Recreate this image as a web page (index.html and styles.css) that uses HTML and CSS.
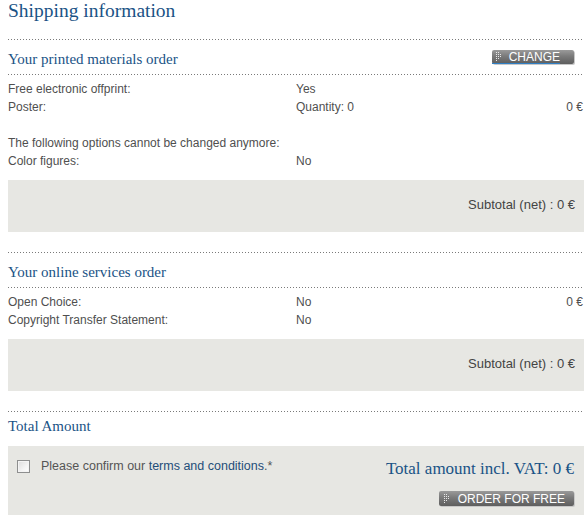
FILE: index.html
```html
<!DOCTYPE html>
<html>
<head>
<meta charset="utf-8">
<link rel="stylesheet" href="styles.css">
</head>
<body>
<div class="page">
  <h1 class="title">Shipping information</h1>
  <div class="dots"></div>

  <div class="sec-head">
    <h2 class="sec-title">Your printed materials order</h2>
    <a class="btn btn-change" href="#"><span class="btn-in"><svg class="grip" width="5" height="9" viewBox="0 0 5 9"><g fill="#e8e8e8"><rect x="0" y="0" width="1" height="1"/><rect x="2" y="0" width="1" height="1"/><rect x="0" y="2" width="1" height="1"/><rect x="2" y="2" width="1" height="1"/><rect x="4" y="2" width="1" height="1"/><rect x="0" y="4" width="1" height="1"/><rect x="2" y="4" width="1" height="1"/><rect x="4" y="4" width="1" height="1"/><rect x="0" y="6" width="1" height="1"/><rect x="2" y="6" width="1" height="1"/><rect x="0" y="8" width="1" height="1"/></g></svg><span class="btn-text">CHANGE</span></span></a>
  </div>
  <div class="dots"></div>

  <div class="rows">
    <div class="row"><span class="c1">Free electronic offprint:</span><span class="c2">Yes</span><span class="c3"></span></div>
    <div class="row"><span class="c1">Poster:</span><span class="c2">Quantity: 0</span><span class="c3">0 €</span></div>
    <div class="row"><span class="c1">&nbsp;</span><span class="c2"></span><span class="c3"></span></div>
    <div class="row"><span class="full">The following options cannot be changed anymore:</span></div>
    <div class="row"><span class="c1">Color figures:</span><span class="c2">No</span><span class="c3"></span></div>
  </div>
  <div class="subtotal">Subtotal (net) : 0 €</div>

  <div class="dots gap"></div>
  <div class="sec-head">
    <h2 class="sec-title">Your online services order</h2>
  </div>
  <div class="dots"></div>
  <div class="rows">
    <div class="row"><span class="c1">Open Choice:</span><span class="c2">No</span><span class="c3">0 €</span></div>
    <div class="row"><span class="c1">Copyright Transfer Statement:</span><span class="c2">No</span><span class="c3"></span></div>
  </div>
  <div class="subtotal">Subtotal (net) : 0 €</div>

  <div class="dots gap"></div>
  <div class="total-head">
    <h2 class="sec-title">Total Amount</h2>
  </div>
  <div class="total-box">
    <div class="total-top">
      <label class="confirm"><input type="checkbox" class="cb"><span>Please confirm our <a class="link" href="#">terms and conditions</a>.*</span></label>
      <div class="total-amount">Total amount incl. VAT: 0 €</div>
    </div>
    <div class="total-actions">
      <a class="btn btn-order" href="#"><span class="btn-in plain"><svg class="grip" width="5" height="9" viewBox="0 0 5 9"><g fill="#e8e8e8"><rect x="0" y="0" width="1" height="1"/><rect x="2" y="0" width="1" height="1"/><rect x="0" y="2" width="1" height="1"/><rect x="2" y="2" width="1" height="1"/><rect x="4" y="2" width="1" height="1"/><rect x="0" y="4" width="1" height="1"/><rect x="2" y="4" width="1" height="1"/><rect x="4" y="4" width="1" height="1"/><rect x="0" y="6" width="1" height="1"/><rect x="2" y="6" width="1" height="1"/><rect x="0" y="8" width="1" height="1"/></g></svg><span class="btn-text">ORDER FOR FREE</span></span></a>
    </div>
  </div>
</div>
</body>
</html>
```

FILE: styles.css
```css
html, body {
  margin: 0;
  padding: 0;
  background: #ffffff;
}
body {
  padding: 0 3px 0 8px;
  font-family: "Liberation Sans", Arial, sans-serif;
  font-size: 12px;
  color: #4f4f4f;
  overflow: hidden;
}
.page {
  width: 576px;
}
.title {
  margin: 0 0 17px 0;
  font-family: "Liberation Serif", "Times New Roman", serif;
  font-weight: normal;
  font-size: 19.5px;
  line-height: 22px;
  color: #1a5386;
}
.dots {
  height: 1px;
  background: repeating-linear-gradient(to right, #7a7a7a 0 1px, transparent 1px 3px);
}
.dots.gap {
  margin-top: 20px;
}
.sec-head {
  display: flex;
  justify-content: space-between;
  align-items: flex-start;
  padding: 9px 10px 5px 0;
}
.sec-title {
  margin: 0;
  font-family: "Liberation Serif", "Times New Roman", serif;
  font-weight: normal;
  font-size: 15px;
  line-height: 20px;
  color: #1a5386;
}
.btn {
  display: inline-flex;
  align-items: stretch;
  height: 14px;
  padding-right: 14px;
  border-radius: 2px;
  background: linear-gradient(to bottom, #9a9a9a 0%, #7a7a7a 45%, #5e5e5e 100%);
  box-shadow: 1px 1px 0 #c8c8c8;
  text-decoration: none;
  color: #ffffff;
}
.btn-change {
  margin-top: 1px;
}
.btn-in {
  display: flex;
  align-items: center;
  padding-left: 4px;
  border-bottom: 1px solid #2f7fc4;
  box-sizing: border-box;
}
.btn-in.plain {
  border-bottom: none;
}
.grip {
  display: block;
  margin-right: 8px;
}
.btn-text {
  font-size: 12px;
  line-height: 14px;
  color: #ffffff;
  white-space: nowrap;
}
.btn-order {
  height: 15px;
  padding-right: 9px;
  margin-right: 0;
}
.btn-order .btn-in {
  padding-left: 5px;
}
.btn-order .grip {
  margin-right: 9px;
}
.rows {
  padding-top: 5px;
}
.row {
  display: grid;
  grid-template-columns: 288px 1fr auto;
  line-height: 18px;
  height: 18px;
}
.row .full {
  grid-column: 1 / 4;
}
.c3 {
  text-align: right;
  padding-right: 1px;
}
.subtotal {
  margin-top: 10px;
  height: 52px;
  box-sizing: border-box;
  background: #e7e7e3;
  display: flex;
  align-items: center;
  justify-content: flex-end;
  padding: 0 9px 4px 0;
  font-size: 13px;
  color: #444444;
}
.total-head {
  padding: 4px 0 0 0;
}
.total-box {
  margin-top: 10px;
  background: #e7e7e3;
  padding: 13px 10px 20px 9px;
}
.total-top {
  display: flex;
  justify-content: space-between;
  align-items: flex-start;
}
.confirm {
  display: flex;
  align-items: center;
  line-height: 14px;
  font-size: 12.5px;
  color: #555555;
}
.cb {
  appearance: none;
  -webkit-appearance: none;
  margin: 0 11px 0 0;
  width: 13px;
  height: 13px;
  box-sizing: border-box;
  border: 1px solid #8e8f8f;
  background: linear-gradient(135deg, #dcdcdc 0%, #f4f4f4 60%, #ffffff 100%);
  box-shadow: inset 0 0 0 1px #f4f4f4;
}
.link {
  color: #1f4e79;
  text-decoration: none;
}
.total-amount {
  font-family: "Liberation Serif", "Times New Roman", serif;
  font-size: 17px;
  line-height: 20px;
  color: #1a5386;
}
.total-actions {
  display: flex;
  justify-content: flex-end;
  margin-top: 12px;
}
```
